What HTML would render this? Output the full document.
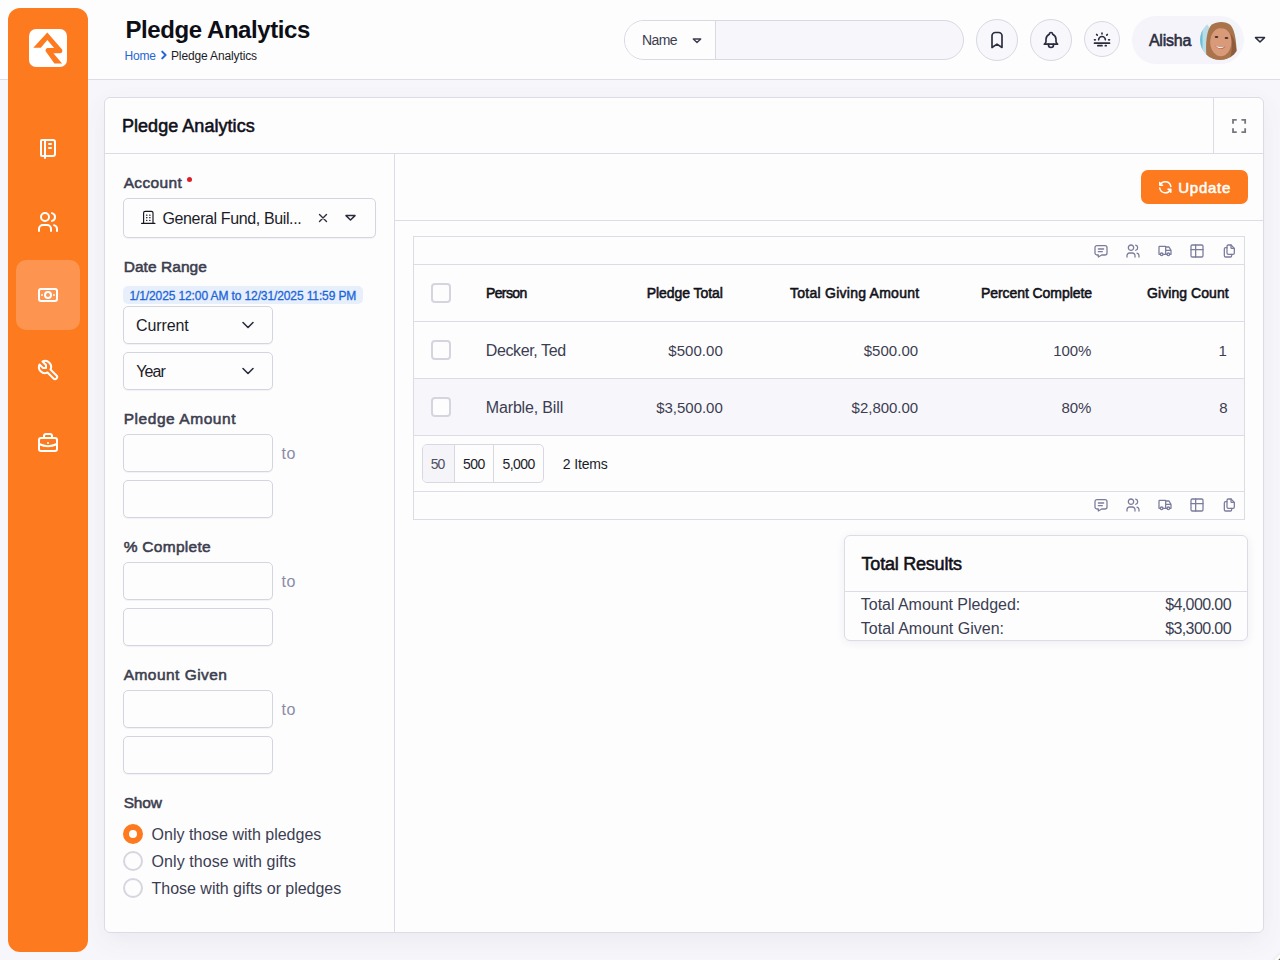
<!DOCTYPE html>
<html><head><meta charset="utf-8">
<style>
*{box-sizing:border-box;margin:0;padding:0}
html,body{width:1280px;height:960px;overflow:hidden;background:#f7f7fb;font-family:"Liberation Sans",sans-serif;color:#1c1c28}
.a{position:absolute}
.t{position:absolute;white-space:nowrap;line-height:normal}
svg.i{position:absolute;fill:none;stroke-linecap:round;stroke-linejoin:round;overflow:visible}
#hdr{left:0;top:0;width:1280px;height:80px;background:#fdfdfd;border-bottom:1px solid #dedee8}
#side{left:8px;top:8px;width:80px;height:944px;background:#fd7a1f;border-radius:12px}
.logo{left:29px;top:29px;width:38px;height:38px;background:#fff;border-radius:7px}
.navact{left:16px;top:260px;width:64px;height:70px;border-radius:10px;background:#fd9450}
#panel{left:104px;top:97px;width:1160px;height:836px;background:#fdfdfe;border:1px solid #dcdce6;border-radius:6px;box-shadow:0 8px 24px rgba(40,40,90,.065)}
.ln{position:absolute;background:#dcdce6}
.inp{position:absolute;background:#fdfdfe;border:1px solid #d5d5e1;border-radius:5px;box-shadow:0 1px 1px rgba(30,30,60,.05)}
.circ{position:absolute;border:1px solid #d8d8e2;border-radius:50%;background:#f7f7fc}
.cb{position:absolute;width:20px;height:20px;border:2px solid #d5d5e0;border-radius:4px;background:#fdfdfe}

</style></head><body>
<div id="hdr" class="a"></div>
<div id="side" class="a"></div>
<div class="logo a"></div>
<svg class="a" style="left:29px;top:29px" width="38" height="38" viewBox="29 29 38 38"><path fill="#fd7a1f" d="M47.3 32.4 L33.3 47.8 L40.8 47.8 L47.3 39.9 L54.2 48 L47.4 48 Q45.2 48.3 45.5 51 L54.4 63.6 L62.1 63.6 L53.4 53.2 L60 53.2 Q62.8 53 62.3 49.7 Z"/></svg>
<div class="navact a"></div>
<svg class="i" style="left:36px;top:136px" width="24" height="24" viewBox="0 0 24 24" stroke="#fff" stroke-width="2"><path d="M6 4h11a2 2 0 0 1 2 2v12a2 2 0 0 1 -2 2h-11a1 1 0 0 1 -1 -1v-14a1 1 0 0 1 1 -1m3 0v18"/><path d="M13 8l2 0"/><path d="M13 12l2 0"/></svg>
<svg class="i" style="left:36px;top:210px" width="24" height="24" viewBox="0 0 24 24" stroke="#fff" stroke-width="2"><path d="M9 7m-4 0a4 4 0 1 0 8 0a4 4 0 1 0 -8 0"/><path d="M3 21v-2a4 4 0 0 1 4 -4h4a4 4 0 0 1 4 4v2"/><path d="M16 3.13a4 4 0 0 1 0 7.75"/><path d="M21 21v-2a4 4 0 0 0 -3 -3.85"/></svg>
<svg class="i" style="left:36px;top:283px" width="24" height="24" viewBox="0 0 24 24" stroke="#fff" stroke-width="2"><path d="M12 12m-3 0a3 3 0 1 0 6 0a3 3 0 1 0 -6 0"/><path d="M3 6m0 2a2 2 0 0 1 2 -2h14a2 2 0 0 1 2 2v8a2 2 0 0 1 -2 2h-14a2 2 0 0 1 -2 -2z"/><path d="M18 12l.01 0"/><path d="M6 12l.01 0"/></svg>
<svg class="i" style="left:36px;top:358px" width="24" height="24" viewBox="0 0 24 24" stroke="#fff" stroke-width="2"><path d="M7 10h3v-3l-3.5 -3.5a6 6 0 0 1 8 8l6 6a2 2 0 0 1 -3 3l-6 -6a6 6 0 0 1 -8 -8l3.5 3.5"/></svg>
<svg class="i" style="left:36px;top:431px" width="24" height="24" viewBox="0 0 24 24" stroke="#fff" stroke-width="2"><path d="M3 7m0 2a2 2 0 0 1 2 -2h14a2 2 0 0 1 2 2v9a2 2 0 0 1 -2 2h-14a2 2 0 0 1 -2 -2z"/><path d="M8 7v-2a2 2 0 0 1 2 -2h4a2 2 0 0 1 2 2v2"/><path d="M12 12l0 .01"/><path d="M3 13a20 20 0 0 0 18 0"/></svg>
<div class="t" style="left:125.50px;top:16px;font-size:24px;font-weight:bold;color:#0e0e16;letter-spacing:-0.428px;">Pledge Analytics</div>
<div class="t" style="left:124.60px;top:49px;font-size:12px;color:#2566d6;letter-spacing:-0.200px;">Home</div>
<svg class="i" style="left:159px;top:50px" width="10" height="10" viewBox="0 0 10 10" stroke="#2566d6" stroke-width="2"><path d="M3.2 1.6l3.4 3.4l-3.4 3.4"/></svg>
<div class="t" style="left:171.00px;top:49px;font-size:12px;color:#1c1c28;letter-spacing:-0.133px;">Pledge Analytics</div>
<div class="a" style="left:624px;top:20px;width:340px;height:40px;border:1px solid #d9d9e3;border-radius:20px;background:#f6f6fb;overflow:hidden"><div class="a" style="left:0;top:0;width:91px;height:38px;background:#fdfdfe;border-right:1px solid #d9d9e3"></div></div>
<div class="t" style="left:642.00px;top:32px;font-size:14px;color:#3c3d4e;letter-spacing:-0.625px;">Name</div>
<svg class="i" style="left:692px;top:38px" width="10" height="6" viewBox="0 0 10 6" stroke="#3c3d4e" stroke-width="1.4"><path d="M1.3 1h7.4l-3.7 3.6z"/></svg>
<div class="circ" style="left:976px;top:19px;width:42px;height:42px"></div>
<div class="circ" style="left:1030px;top:19px;width:42px;height:42px"></div>
<div class="circ" style="left:1084px;top:21px;width:36px;height:36px"></div>
<svg class="i" style="left:987px;top:30px" width="20" height="20" viewBox="0 0 24 24" stroke="#2b2d3f" stroke-width="2"><path d="M18 7v14l-6 -4l-6 4v-14a4 4 0 0 1 4 -4h4a4 4 0 0 1 4 4z"/></svg>
<svg class="i" style="left:1041px;top:30px" width="20" height="20" viewBox="0 0 24 24" stroke="#2b2d3f" stroke-width="2"><path d="M10 5a2 2 0 1 1 4 0a7 7 0 0 1 4 6v3a4 4 0 0 0 2 3h-16a4 4 0 0 0 2 -3v-3a7 7 0 0 1 4 -6"/><path d="M9 17v1a3 3 0 0 0 6 0v-1"/></svg>
<svg class="i" style="left:1092px;top:29px" width="20" height="20" viewBox="0 0 24 24" stroke="#2b2d3f" stroke-width="2"><path d="M3 13h1"/><path d="M20 13h1"/><path d="M5.6 6.6l.7 .7"/><path d="M18.4 6.6l-.7 .7"/><path d="M8 13a4 4 0 1 1 8 0"/><path d="M3 17h18"/><path d="M7 20h5"/><path d="M16 20h1"/><path d="M12 5v1"/></svg>
<div class="a" style="left:1132px;top:16px;width:112px;height:48px;border-radius:24px;background:#f4f4fa"></div>
<div class="t" style="left:1148.88px;top:32px;font-size:16px;color:#2b2d3f;letter-spacing:-0.235px;-webkit-text-stroke:0.55px #2b2d3f;">Alisha</div>
<svg class="a" style="left:1200px;top:20px" width="40" height="40" viewBox="0 0 40 40"><defs><clipPath id="cc"><circle cx="20" cy="20" r="20"/></clipPath><filter id="bl"><feGaussianBlur stdDeviation="0.5"/></filter></defs><g clip-path="url(#cc)"><rect width="40" height="40" fill="#eef6f8"/><g filter="url(#bl)"><ellipse cx="5" cy="20" rx="6" ry="17" fill="#b9dde7"/><rect x="-1" y="10" width="3.5" height="22" fill="#6cc0da"/><path d="M7 40 C5 28 6 9 12 4.5 C17 1 26 1 30.5 5 C36 11 37 28 36.5 40 Z" fill="#a9734c"/><ellipse cx="20.8" cy="21.8" rx="10.6" ry="14.5" fill="#d99a7a"/><path d="M10 20 C9.5 9 15 4.5 21.5 4.5 C28 4.5 31.5 9 31.5 17 C30 11 26 8 20 8.2 C15 8.5 11.5 13 10 20 Z" fill="#a9734c"/><path d="M30.5 14 C33 22 32 30 30 40 L37 40 C37 28 35 18 30.5 14Z" fill="#8f5b3a"/><ellipse cx="16.5" cy="17" rx="1.9" ry="1" fill="#4a2c22"/><ellipse cx="26.5" cy="18" rx="1.9" ry="1" fill="#4a2c22"/><path d="M14.5 25.5 Q20 32 26 26.5 Q20 28.5 14.5 25.5 Z" fill="#b85e50"/><path d="M15.5 26 Q20 30 24.5 26.8 Q20 27.8 15.5 26 Z" fill="#ffffff"/></g></g></svg>
<svg class="i" style="left:1254px;top:36px" width="12" height="8" viewBox="0 0 12 8" stroke="#2b2d3f" stroke-width="1.5"><path d="M1.5 1.6h9l-4.5 4.4z"/></svg>
<div id="panel" class="a"></div>
<div class="ln" style="left:105px;top:153px;width:1158px;height:1px"></div>
<div class="ln" style="left:1213px;top:98px;width:1px;height:55px"></div>
<svg class="i" style="left:1231.5px;top:119.2px" width="14.2" height="14" viewBox="0 0 15 15" stroke="#77777f" stroke-width="1.95"><path d="M1 5V1h4M10 1h4v4M14 10v4h-4M5 14H1v-4" stroke-linecap="butt" stroke-linejoin="miter"/></svg>
<div class="t" style="left:121.98px;top:116px;font-size:18px;color:#101018;letter-spacing:0.042px;-webkit-text-stroke:0.55px #101018;">Pledge Analytics</div>
<div class="ln" style="left:394px;top:154px;width:1px;height:778px"></div>
<div class="t" style="left:123.68px;top:174px;font-size:15.5px;color:#3c3d4e;letter-spacing:0.342px;-webkit-text-stroke:0.55px #3c3d4e;">Account</div>
<div class="a" style="left:186.8px;top:177.3px;width:5px;height:5px;border-radius:50%;background:#dc1f26"></div>
<div class="inp" style="left:123px;top:198px;width:253px;height:40px"></div>
<svg class="i" style="left:140px;top:209px" width="16" height="16" viewBox="0 0 16 16" stroke="#16161e" stroke-width="1.15"><path d="M1.6 14.4H14.9"/><path d="M3.6 14.4V3.9a1.6 1.6 0 0 1 1.6 -1.6H11.4a1.6 1.6 0 0 1 1.6 1.6V14.4"/><path d="M6.6 6.2h.3M9.7 6.2h.3M6.6 8.7h.3M9.7 8.7h.3M6.6 11.3h.3M9.7 11.3h.3" stroke-width="1.3"/></svg>
<div class="t" style="left:162.50px;top:210px;font-size:16px;color:#1c1c28;letter-spacing:-0.378px;">General Fund, Buil...</div>
<svg class="i" style="left:318px;top:213px" width="10" height="10" viewBox="0 0 10 10" stroke="#2b2d3f" stroke-width="1.4"><path d="M1.5 1.5l7 7M8.5 1.5l-7 7"/></svg>
<svg class="i" style="left:344px;top:213px" width="13" height="10" viewBox="0 0 13 10" stroke="#2b2d3f" stroke-width="1.5"><path d="M2 2.6h9l-4.5 4.4z"/></svg>
<div class="t" style="left:123.68px;top:258px;font-size:15.5px;color:#3c3d4e;letter-spacing:0.056px;-webkit-text-stroke:0.55px #3c3d4e;">Date Range</div>
<div class="a" style="left:123px;top:286px;width:240px;height:18px;border-radius:5px;background:#e7effb"></div>
<div class="t" style="left:129.45px;top:289px;font-size:12px;color:#1b65d9;letter-spacing:-0.112px;-webkit-text-stroke:0.3px #1b65d9;">1/1/2025 12:00 AM to 12/31/2025 11:59 PM</div>
<div class="inp" style="left:123px;top:306px;width:150px;height:38px"></div>
<div class="t" style="left:136.00px;top:317px;font-size:16px;color:#1c1c28;letter-spacing:-0.096px;">Current</div>
<svg class="i" style="left:242px;top:320px" width="12" height="10" viewBox="0 0 12 10" stroke="#2b2d3f" stroke-width="1.6"><path d="M1 2.5l5 5l5 -5"/></svg>
<div class="inp" style="left:123px;top:352px;width:150px;height:38px"></div>
<div class="t" style="left:136.30px;top:363px;font-size:16px;color:#1c1c28;letter-spacing:-0.958px;">Year</div>
<svg class="i" style="left:242px;top:366px" width="12" height="10" viewBox="0 0 12 10" stroke="#2b2d3f" stroke-width="1.6"><path d="M1 2.5l5 5l5 -5"/></svg>
<div class="t" style="left:123.68px;top:410px;font-size:15.5px;color:#3c3d4e;letter-spacing:0.560px;-webkit-text-stroke:0.55px #3c3d4e;">Pledge Amount</div>
<div class="inp" style="left:123px;top:434px;width:150px;height:38px"></div>
<div class="inp" style="left:123px;top:480px;width:150px;height:38px"></div>
<div class="t" style="left:281.40px;top:445px;font-size:16px;color:#8b8ca6;letter-spacing:0.725px;">to</div>
<div class="t" style="left:123.68px;top:538px;font-size:15.5px;color:#3c3d4e;letter-spacing:0.286px;-webkit-text-stroke:0.55px #3c3d4e;">% Complete</div>
<div class="inp" style="left:123px;top:562px;width:150px;height:38px"></div>
<div class="inp" style="left:123px;top:608px;width:150px;height:38px"></div>
<div class="t" style="left:281.40px;top:573px;font-size:16px;color:#8b8ca6;letter-spacing:0.725px;">to</div>
<div class="t" style="left:123.68px;top:666px;font-size:15.5px;color:#3c3d4e;letter-spacing:0.464px;-webkit-text-stroke:0.55px #3c3d4e;">Amount Given</div>
<div class="inp" style="left:123px;top:690px;width:150px;height:38px"></div>
<div class="inp" style="left:123px;top:736px;width:150px;height:38px"></div>
<div class="t" style="left:281.40px;top:701px;font-size:16px;color:#8b8ca6;letter-spacing:0.725px;">to</div>
<div class="t" style="left:123.68px;top:794px;font-size:15.5px;color:#3c3d4e;letter-spacing:-0.175px;-webkit-text-stroke:0.55px #3c3d4e;">Show</div>
<div class="a" style="left:123px;top:824px;width:20px;height:20px;border-radius:50%;border:6px solid #fd7a1f;background:#fff"></div>
<div class="a" style="left:123px;top:851px;width:20px;height:20px;border-radius:50%;border:2px solid #d6d6e0;background:#fdfdfe"></div>
<div class="a" style="left:123px;top:878px;width:20px;height:20px;border-radius:50%;border:2px solid #d6d6e0;background:#fdfdfe"></div>
<div class="t" style="left:151.60px;top:826px;font-size:16px;color:#3c3d52;letter-spacing:-0.008px;">Only those with pledges</div>
<div class="t" style="left:151.60px;top:853px;font-size:16px;color:#3c3d52;letter-spacing:0.064px;">Only those with gifts</div>
<div class="t" style="left:151.60px;top:880px;font-size:16px;color:#3c3d52;letter-spacing:-0.026px;">Those with gifts or pledges</div>
<div class="a" style="left:1141px;top:170px;width:107px;height:34px;border-radius:7px;background:#fd7a1f"></div>
<svg class="i" style="left:1157.2px;top:179px" width="16.6" height="16.6" viewBox="0 0 24 24" stroke="#fff" stroke-width="2.2"><path d="M20 11a8.1 8.1 0 0 0 -15.5 -2m-.5 -4v4h4"/><path d="M4 13a8.1 8.1 0 0 0 15.5 2m.5 4v-4h-4"/></svg>
<div class="t" style="left:1178.28px;top:179px;font-size:15px;color:#ffffff;letter-spacing:0.735px;-webkit-text-stroke:0.55px #ffffff;">Update</div>
<div class="ln" style="left:395px;top:220px;width:868px;height:1px"></div>
<div class="a" style="left:413px;top:236px;width:832px;height:284px;border:1px solid #dcdce6;background:#fdfdfe"></div>
<div class="ln" style="left:414px;top:264px;width:830px;height:1px"></div>
<div class="ln" style="left:414px;top:321px;width:830px;height:1px"></div>
<div class="a" style="left:414px;top:379px;width:830px;height:56px;background:#f7f7fb"></div>
<div class="ln" style="left:414px;top:378px;width:830px;height:1px"></div>
<div class="ln" style="left:414px;top:435px;width:830px;height:1px"></div>
<div class="ln" style="left:414px;top:491px;width:830px;height:1px"></div>
<svg class="i" style="left:1093px;top:242.5px" width="16" height="16" viewBox="0 0 24 24" stroke="#7b7c9c" stroke-width="1.9"><path d="M8 9h8"/><path d="M8 13h6"/><path d="M18 4a3 3 0 0 1 3 3v8a3 3 0 0 1 -3 3h-5l-5 3v-3h-2a3 3 0 0 1 -3 -3v-8a3 3 0 0 1 3 -3h12z"/></svg>
<svg class="i" style="left:1125px;top:242.5px" width="16" height="16" viewBox="0 0 24 24" stroke="#7b7c9c" stroke-width="1.9"><path d="M9 7m-4 0a4 4 0 1 0 8 0a4 4 0 1 0 -8 0"/><path d="M3 21v-2a4 4 0 0 1 4 -4h4a4 4 0 0 1 4 4v2"/><path d="M16 3.13a4 4 0 0 1 0 7.75"/><path d="M21 21v-2a4 4 0 0 0 -3 -3.85"/></svg>
<svg class="i" style="left:1157px;top:242.5px" width="16" height="16" viewBox="0 0 24 24" stroke="#7b7c9c" stroke-width="1.9"><path d="M7 17m-2 0a2 2 0 1 0 4 0a2 2 0 1 0 -4 0"/><path d="M17 17m-2 0a2 2 0 1 0 4 0a2 2 0 1 0 -4 0"/><path d="M5 17h-2v-11a1 1 0 0 1 1 -1h9v12m-4 0h6m4 0h2v-6h-8m0 -5h5l3 5"/></svg>
<svg class="i" style="left:1189px;top:242.5px" width="16" height="16" viewBox="0 0 24 24" stroke="#7b7c9c" stroke-width="1.9"><path d="M3 5a2 2 0 0 1 2 -2h14a2 2 0 0 1 2 2v14a2 2 0 0 1 -2 2h-14a2 2 0 0 1 -2 -2v-14z"/><path d="M3 10h18"/><path d="M10 3v18"/></svg>
<svg class="i" style="left:1221px;top:242.5px" width="16" height="16" viewBox="0 0 24 24" stroke="#7b7c9c" stroke-width="1.9"><path d="M15 3v4a1 1 0 0 0 1 1h4"/><path d="M18 17h-7a2 2 0 0 1 -2 -2v-10a2 2 0 0 1 2 -2h4l5 5v7a2 2 0 0 1 -2 2z"/><path d="M16 17v2a2 2 0 0 1 -2 2h-7a2 2 0 0 1 -2 -2v-10a2 2 0 0 1 2 -2h2"/></svg>
<svg class="i" style="left:1093px;top:497px" width="16" height="16" viewBox="0 0 24 24" stroke="#7b7c9c" stroke-width="1.9"><path d="M8 9h8"/><path d="M8 13h6"/><path d="M18 4a3 3 0 0 1 3 3v8a3 3 0 0 1 -3 3h-5l-5 3v-3h-2a3 3 0 0 1 -3 -3v-8a3 3 0 0 1 3 -3h12z"/></svg>
<svg class="i" style="left:1125px;top:497px" width="16" height="16" viewBox="0 0 24 24" stroke="#7b7c9c" stroke-width="1.9"><path d="M9 7m-4 0a4 4 0 1 0 8 0a4 4 0 1 0 -8 0"/><path d="M3 21v-2a4 4 0 0 1 4 -4h4a4 4 0 0 1 4 4v2"/><path d="M16 3.13a4 4 0 0 1 0 7.75"/><path d="M21 21v-2a4 4 0 0 0 -3 -3.85"/></svg>
<svg class="i" style="left:1157px;top:497px" width="16" height="16" viewBox="0 0 24 24" stroke="#7b7c9c" stroke-width="1.9"><path d="M7 17m-2 0a2 2 0 1 0 4 0a2 2 0 1 0 -4 0"/><path d="M17 17m-2 0a2 2 0 1 0 4 0a2 2 0 1 0 -4 0"/><path d="M5 17h-2v-11a1 1 0 0 1 1 -1h9v12m-4 0h6m4 0h2v-6h-8m0 -5h5l3 5"/></svg>
<svg class="i" style="left:1189px;top:497px" width="16" height="16" viewBox="0 0 24 24" stroke="#7b7c9c" stroke-width="1.9"><path d="M3 5a2 2 0 0 1 2 -2h14a2 2 0 0 1 2 2v14a2 2 0 0 1 -2 2h-14a2 2 0 0 1 -2 -2v-14z"/><path d="M3 10h18"/><path d="M10 3v18"/></svg>
<svg class="i" style="left:1221px;top:497px" width="16" height="16" viewBox="0 0 24 24" stroke="#7b7c9c" stroke-width="1.9"><path d="M15 3v4a1 1 0 0 0 1 1h4"/><path d="M18 17h-7a2 2 0 0 1 -2 -2v-10a2 2 0 0 1 2 -2h4l5 5v7a2 2 0 0 1 -2 2z"/><path d="M16 17v2a2 2 0 0 1 -2 2h-7a2 2 0 0 1 -2 -2v-10a2 2 0 0 1 2 -2h2"/></svg>
<div class="cb" style="left:431px;top:283px"></div>
<div class="cb" style="left:431px;top:340px"></div>
<div class="cb" style="left:431px;top:397px"></div>
<div class="t" style="left:485.97px;top:285px;font-size:14px;color:#111118;letter-spacing:-0.625px;-webkit-text-stroke:0.55px #111118;">Person</div>
<div class="t" style="left:646.77px;top:285px;font-size:14px;color:#111118;letter-spacing:-0.066px;-webkit-text-stroke:0.55px #111118;">Pledge Total</div>
<div class="t" style="left:790.07px;top:285px;font-size:14px;color:#111118;letter-spacing:0.253px;-webkit-text-stroke:0.55px #111118;">Total Giving Amount</div>
<div class="t" style="left:980.88px;top:285px;font-size:14px;color:#111118;letter-spacing:-0.058px;-webkit-text-stroke:0.55px #111118;">Percent Complete</div>
<div class="t" style="left:1147.08px;top:285px;font-size:14px;color:#111118;letter-spacing:0.059px;-webkit-text-stroke:0.55px #111118;">Giving Count</div>
<div class="t" style="left:485.80px;top:342px;font-size:16px;color:#3c3d52;letter-spacing:-0.395px;">Decker, Ted</div>
<div class="t" style="left:668.30px;top:342px;font-size:15px;color:#3c3d52;letter-spacing:0.042px;">$500.00</div>
<div class="t" style="left:863.70px;top:342px;font-size:15px;color:#3c3d52;letter-spacing:0.042px;">$500.00</div>
<div class="t" style="left:1053.20px;top:342px;font-size:15px;color:#3c3d52;letter-spacing:-0.058px;">100%</div>
<div class="t" style="left:1218.42px;top:342px;font-size:15px;color:#3c3d52;letter-spacing:0.000px;">1</div>
<div class="t" style="left:485.80px;top:399px;font-size:16px;color:#3c3d52;letter-spacing:-0.157px;">Marble, Bill</div>
<div class="t" style="left:656.20px;top:399px;font-size:15px;color:#3c3d52;letter-spacing:-0.019px;">$3,500.00</div>
<div class="t" style="left:851.60px;top:399px;font-size:15px;color:#3c3d52;letter-spacing:-0.019px;">$2,800.00</div>
<div class="t" style="left:1061.50px;top:399px;font-size:15px;color:#3c3d52;letter-spacing:-0.050px;">80%</div>
<div class="t" style="left:1219.22px;top:399px;font-size:15px;color:#3c3d52;letter-spacing:0.000px;">8</div>
<div class="a" style="left:422px;top:444px;width:122px;height:39px;border:1px solid #d8d8e2;border-radius:5px;overflow:hidden;background:#fdfdfe"><div class="a" style="left:0;top:0;width:32px;height:37px;background:#f4f4f9;border-right:1px solid #d8d8e2"></div><div class="a" style="left:70px;top:0;width:1px;height:37px;background:#d8d8e2"></div></div>
<div class="t" style="left:430.80px;top:456px;font-size:14px;color:#4e4f62;letter-spacing:-1.025px;">50</div>
<div class="t" style="left:463.00px;top:456px;font-size:14px;color:#1c1c28;letter-spacing:-0.537px;">500</div>
<div class="t" style="left:502.60px;top:456px;font-size:14px;color:#1c1c28;letter-spacing:-0.575px;">5,000</div>
<div class="t" style="left:562.80px;top:456px;font-size:14px;color:#1c1c28;letter-spacing:-0.146px;">2 Items</div>
<div class="a" style="left:844px;top:535px;width:404px;height:106px;border:1px solid #dcdce6;border-radius:6px;background:#fdfdfe;box-shadow:0 2px 10px rgba(40,40,90,.07)"></div>
<div class="ln" style="left:845px;top:591px;width:402px;height:1px"></div>
<div class="t" style="left:861.57px;top:554px;font-size:18px;color:#101018;letter-spacing:-0.221px;-webkit-text-stroke:0.55px #101018;">Total Results</div>
<div class="t" style="left:860.80px;top:596px;font-size:16px;color:#3c3d52;letter-spacing:-0.031px;">Total Amount Pledged:</div>
<div class="t" style="left:1165.20px;top:596px;font-size:16px;color:#3c3d52;letter-spacing:-0.603px;">$4,000.00</div>
<div class="t" style="left:860.80px;top:620px;font-size:16px;color:#3c3d52;letter-spacing:0.000px;">Total Amount Given:</div>
<div class="t" style="left:1165.20px;top:620px;font-size:16px;color:#3c3d52;letter-spacing:-0.603px;">$3,300.00</div>
<div class="a" style="left:1267px;top:947px;width:68px;height:68px;border-radius:50%;border:3px solid #fff;background:#55704a;box-shadow:0 0 3px rgba(0,0,0,.12)"></div>
</body></html>
